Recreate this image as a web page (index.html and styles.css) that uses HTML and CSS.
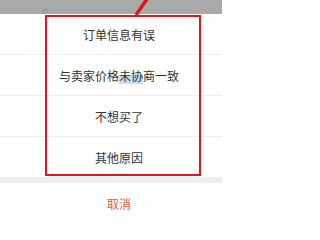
FILE: index.html
```html
<!DOCTYPE html>
<html lang="zh">
<head>
<meta charset="utf-8">
<link rel="stylesheet" href="styles.css">
</head>
<body>
<div class="page">
  <div class="topbar"></div>
  <div class="sheet">
    <div class="row">订单信息有误</div>
    <div class="row">与卖家价格<span class="sel">未协</span>商一致</div>
    <div class="row">不想买了</div>
    <div class="row last">其他原因</div>
  </div>
  <div class="gap"></div>
  <div class="row cancel">取消</div>
  <div class="highlight"></div>
  <svg class="arrow" width="20" height="16" viewBox="0 0 20 16"><line x1="4" y1="15" x2="15" y2="-1" stroke="#e1151b" stroke-width="3.5"/></svg>
  <div class="cursor"></div>
</div>
</body>
</html>
```
FILE: styles.css
```css
html, body {
  margin: 0;
  padding: 0;
  background: #ffffff;
}
.page {
  position: relative;
  width: 222px;
  height: 211px;
  overflow: hidden;
  font-family: "Noto Sans CJK SC", "Noto Sans", sans-serif;
}
.topbar {
  height: 14px;
  background: #a9a9a9;
}
.row {
  height: 40px;
  display: flex;
  align-items: center;
  justify-content: center;
  padding-left: 16px;
  font-size: 12px;
  color: #333333;
  border-bottom: 1px solid #eeeeee;
}
.row.last {
  border-bottom: none;
}
.sel {
  background: linear-gradient(to bottom, transparent 45%, #c9dbef 45%);
}
.gap {
  height: 6px;
  background: #eeeeee;
}
.cancel {
  border-bottom: none;
  color: #ea5a45;
}
.highlight {
  position: absolute;
  left: 45px;
  top: 15px;
  width: 156px;
  height: 161px;
  box-sizing: border-box;
  border: 2.5px solid #e1151b;
}
.arrow {
  position: absolute;
  left: 132px;
  top: 0;
}
.cursor {
  position: absolute;
  left: 42px;
  top: 8px;
  width: 6px;
  height: 5px;
  background: #8c98a6;
  opacity: 0.6;
  border-radius: 1px;
}
```
